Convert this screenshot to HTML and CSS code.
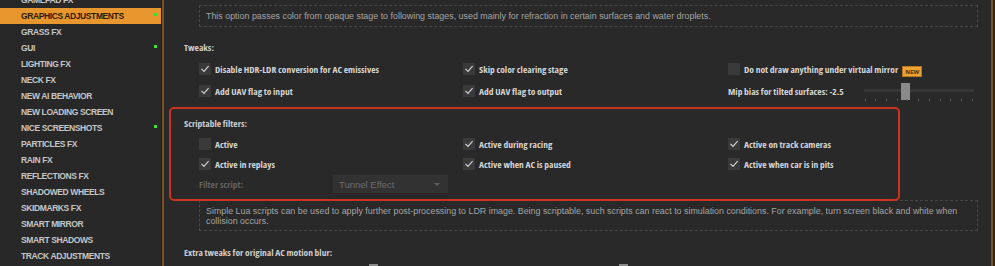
FILE: index.html
```html
<!DOCTYPE html>
<html lang="en">
<head>
  <meta charset="UTF-8" />
  <title>Graphics Adjustments</title>
  <link rel="stylesheet" href="styles.css">
</head>
<body>

<div class="app">
  <!-- Module list -->
  <nav class="sidebar">
    <ul class="menu">
      <li>Gamepad FX</li>
      <li class="active">Graphics Adjustments<span class="dot"></span></li>
      <li>Grass FX</li>
      <li>GUI<span class="dot"></span></li>
      <li>Lighting FX</li>
      <li>Neck FX</li>
      <li>New AI Behavior</li>
      <li>New Loading Screen</li>
      <li>Nice Screenshots<span class="dot"></span></li>
      <li>Particles FX</li>
      <li>Rain FX</li>
      <li>Reflections FX</li>
      <li>Shadowed Wheels</li>
      <li>Skidmarks FX</li>
      <li>Smart Mirror</li>
      <li>Smart Shadows</li>
      <li>Track Adjustments</li>
    </ul>
  </nav>
  <div class="rule"></div>

  <!-- Settings -->
  <main class="content">
    <div class="note note-top">This option passes color from opaque stage to following stages, used mainly for refraction in certain surfaces and water droplets.</div>

    <h3 class="group-title">Tweaks:</h3>
    <div class="options">
      <label class="check"><span class="box"><svg viewBox="0 0 12 12"><path d="M2.5 5.8 L5 8.4 L9.6 3.2"/></svg></span>Disable HDR-LDR conversion for AC emissives</label>
      <label class="check"><span class="box"><svg viewBox="0 0 12 12"><path d="M2.5 5.8 L5 8.4 L9.6 3.2"/></svg></span>Skip color clearing stage</label>
      <label class="check"><span class="box"></span>Do not draw anything under virtual mirror<span class="badge">NEW</span></label>
      <label class="check"><span class="box"><svg viewBox="0 0 12 12"><path d="M2.5 5.8 L5 8.4 L9.6 3.2"/></svg></span>Add UAV flag to input</label>
      <label class="check"><span class="box"><svg viewBox="0 0 12 12"><path d="M2.5 5.8 L5 8.4 L9.6 3.2"/></svg></span>Add UAV flag to output</label>
      <div class="slider-field">
        <span class="check">Mip bias for tilted surfaces: -2.5</span>
        <div class="slider">
          <div class="track"></div>
          <div class="thumb" style="left:34%"></div>
          <div class="ticks"><i></i><i></i><i></i><i></i><i></i><i></i><i></i><i></i><i></i><i></i><i></i></div>
        </div>
      </div>
    </div>

    <section class="highlight">
      <h3 class="group-title">Scriptable filters:</h3>
      <div class="options compact">
        <label class="check"><span class="box"></span>Active</label>
        <label class="check"><span class="box"><svg viewBox="0 0 12 12"><path d="M2.5 5.8 L5 8.4 L9.6 3.2"/></svg></span>Active during racing</label>
        <label class="check"><span class="box"><svg viewBox="0 0 12 12"><path d="M2.5 5.8 L5 8.4 L9.6 3.2"/></svg></span>Active on track cameras</label>
        <label class="check"><span class="box"><svg viewBox="0 0 12 12"><path d="M2.5 5.8 L5 8.4 L9.6 3.2"/></svg></span>Active in replays</label>
        <label class="check"><span class="box"><svg viewBox="0 0 12 12"><path d="M2.5 5.8 L5 8.4 L9.6 3.2"/></svg></span>Active when AC is paused</label>
        <label class="check"><span class="box"><svg viewBox="0 0 12 12"><path d="M2.5 5.8 L5 8.4 L9.6 3.2"/></svg></span>Active when car is in pits</label>
        <div class="field">
          <span class="field-label">Filter script:</span>
          <div class="select">Tunnel Effect<span class="arrow"></span></div>
        </div>
      </div>
    </section>

    <div class="note note-bottom">Simple Lua scripts can be used to apply further post-processing to LDR image. Being scriptable, such scripts can react to simulation conditions. For example, turn screen black and white when collision occurs.</div>

    <h3 class="group-title spaced">Extra tweaks for original AC motion blur:</h3>
    <div class="options blur">
      <div class="slider wide"><div class="thumb" style="left:170px"></div></div>
      <div class="slider wide"><div class="thumb" style="left:156px"></div></div>
    </div>
  </main>
  <div class="edge"></div>
</div>

</body>
</html>
```

FILE: styles.css
```css
* { box-sizing: border-box; }

html, body {
  margin: 0;
  padding: 0;
  height: 100%;
  overflow: hidden;
  background-color: #292929;
  font-family: "Liberation Sans", sans-serif;
  color: #cccccc;
}

.app {
  display: flex;
  height: 266px;
}

/* sidebar */
.sidebar {
  width: 161px;
  flex: none;
  background-color: #282828;
  overflow: hidden;
}

.menu {
  list-style: none;
  margin: -8px 0 0;
  padding: 0;
}

.menu li {
  height: 16px;
  display: flex;
  align-items: center;
  padding-left: 21px;
  font-weight: bold;
  font-size: 8.5px;
  letter-spacing: -0.4px;
  text-transform: uppercase;
  color: #c6c6c6;
}

.menu li.active {
  background-color: #e8962e;
  color: #2a1c08;
}

.dot {
  width: 3px;
  height: 3px;
  margin: 0 4px 4px auto;
  background-color: #46dc38;
}

.rule {
  width: 3px;
  flex: none;
  border-left: 1px solid #1f1f1f;
  background-color: #7a5226;
}

.edge {
  width: 4px;
  flex: none;
  border-left: 2px solid #7a5226;
}

/* content */
.content {
  flex: 1;
  min-width: 0;
  padding: 5px 13px 0 20px;
  overflow: hidden;
}

.note {
  margin-left: 15px;
  border: 1px dashed #464646;
  padding: 5px 6px;
  font-size: 8.9px;
  line-height: 10px;
  color: #a4a4a4;
}

.note-bottom {
  position: relative;
  margin-top: -1px;
  padding: 5px 6px 4px;
}

.group-title,
.check,
.field-label {
  font-family: "Open Sans", "Liberation Sans", sans-serif;
  font-stretch: 75%;
  font-size: 9.5px;
  font-weight: bold;
}

.group-title {
  margin: 14px 0 0;
  line-height: 14px;
  color: #cdcdcd;
}

.group-title.spaced { margin-top: 15px; }

.options {
  display: grid;
  grid-template-columns: 264px 265px 1fr;
  grid-auto-rows: 22px;
  margin: 3px 0 0 15px;
}

.options.compact { grid-auto-rows: 20px; }

.check {
  display: flex;
  align-items: center;
  gap: 4px;
  color: #d4d4d4;
  white-space: nowrap;
}

.box {
  width: 12px;
  height: 12px;
  flex: none;
  background-color: #3a3a3a;
}

.box svg {
  display: block;
  width: 12px;
  height: 12px;
  fill: none;
  stroke: #d2d2d2;
  stroke-width: 1.2;
}

.badge {
  align-self: flex-end;
  margin: 0 0 3px 0;
  padding: 0 2px;
  height: 11px;
  line-height: 10px;
  border: 1px solid #b8741e;
  background-color: #eba336;
  color: #4a2c00;
  font-size: 6px;
  font-stretch: 100%;
}

/* slider */
.slider-field {
  display: flex;
  align-items: center;
  gap: 20px;
}

.slider {
  position: relative;
  width: 110px;
  height: 22px;
}

.track {
  position: absolute;
  left: 0;
  right: 0;
  top: 9px;
  height: 3px;
  background-color: #363636;
}

.thumb {
  position: absolute;
  top: 3px;
  width: 9px;
  height: 17px;
  background-color: #8a8a8a;
}

.ticks {
  position: absolute;
  left: 1px;
  right: 1px;
  top: 19px;
  display: flex;
  justify-content: space-between;
}

.ticks i {
  width: 1px;
  height: 2px;
  background-color: #5c5c5c;
}

/* highlighted group */
.highlight {
  position: relative;
  z-index: 1;
  width: 731px;
  margin: 5px 0 0 -15px;
  padding: 8px 0 5px 13px;
  border: 2px solid #c9331f;
  border-radius: 5px;
}

.highlight .group-title { margin-top: 0; }

.field {
  display: flex;
  align-items: center;
}

.field-label {
  width: 134px;
  color: #626262;
}

.select {
  width: 115px;
  height: 18px;
  display: flex;
  align-items: center;
  padding: 0 8px 0 6px;
  background-color: #323232;
  font-size: 9.5px;
  color: #6c6c6c;
}

.arrow {
  margin-left: auto;
  border-left: 3px solid transparent;
  border-right: 3px solid transparent;
  border-top: 3px solid #5e5e5e;
}

.options.blur {
  grid-template-columns: 264px 1fr;
  margin-top: 1px;
}

.slider.wide { width: 250px; }
```
